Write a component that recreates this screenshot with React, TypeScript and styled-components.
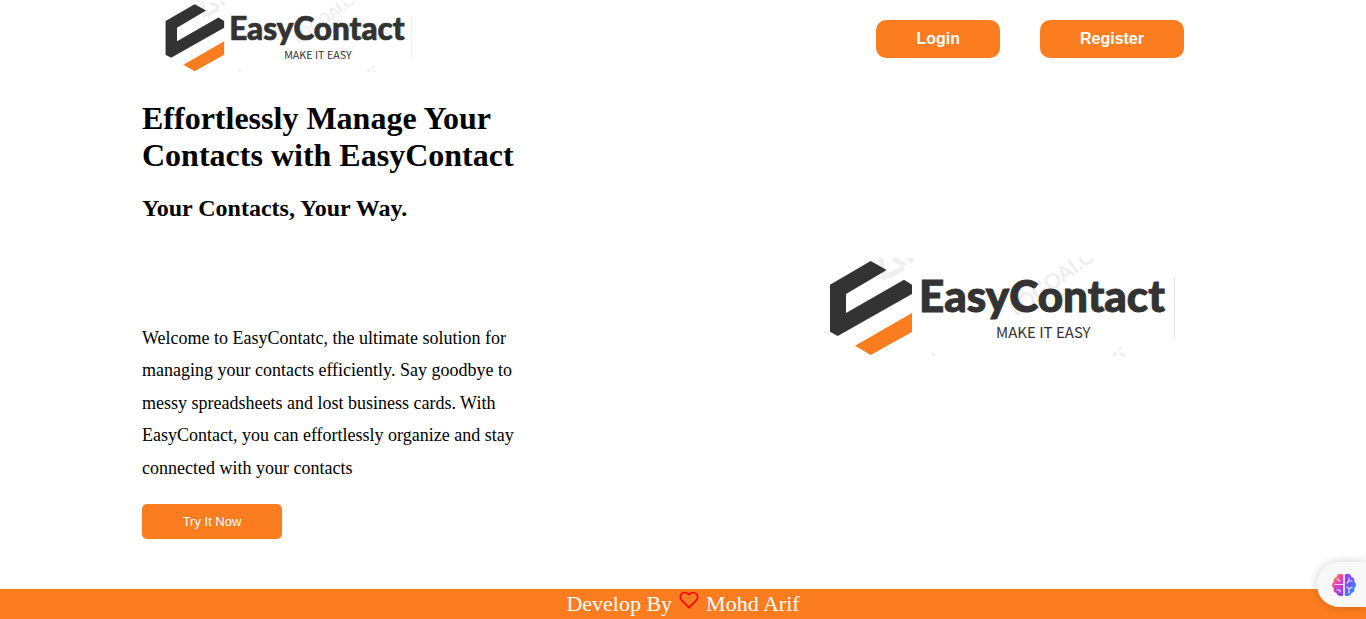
import React from "react";
import styled, { createGlobalStyle } from "styled-components";

const ORANGE = "#fc7d1f";

const GlobalStyle = createGlobalStyle`
  *, *::before, *::after { box-sizing: border-box; }
  html, body, #root { height: 100%; }
  body {
    margin: 0;
    background: #fff;
    color: #000;
    font-family: "Liberation Serif", "Times New Roman", serif;
  }
`;

const Page = styled.div`
  display: flex;
  flex-direction: column;
  min-height: 100%;
`;

const Header = styled.header`
  display: flex;
  align-items: flex-start;
  justify-content: space-between;
  padding: 2px 182px 0 162px;
`;

const HomeLink = styled.a`
  display: block;
`;

const LogoSvg = styled.svg<{ $width: number }>`
  display: block;
  width: ${({ $width }) => $width}px;
  height: auto;
`;

const Nav = styled.nav`
  display: flex;
  gap: 40px;
  padding-top: 18px;
`;

const NavButton = styled.button`
  height: 38px;
  padding: 0 40px;
  border: 0;
  border-radius: 10px;
  background: ${ORANGE};
  color: #fff;
  font: bold 16px/38px "Liberation Sans", Arial, sans-serif;
  cursor: pointer;
`;

const Main = styled.main`
  display: flex;
  flex: 1;
  align-items: flex-start;
  justify-content: space-between;
  padding: 28px 191px 50px 142px;
`;

const Intro = styled.section`
  width: 384px;
`;

const Title = styled.h1`
  margin: 0;
  font-size: 32px;
  line-height: 37px;
`;

const Subtitle = styled.h2`
  margin: 20px 0 0;
  font-size: 24px;
  line-height: 28px;
`;

const Description = styled.p`
  margin: 100px 0 0;
  font-size: 18px;
  line-height: 1.8;
`;

const TryButton = styled.button`
  display: block;
  min-width: 140px;
  height: 35px;
  margin-top: 20px;
  padding: 0 32px;
  border: 0;
  border-radius: 5px;
  background: ${ORANGE};
  color: #fff;
  font: 13px/35px "Liberation Sans", Arial, sans-serif;
  cursor: pointer;
`;

const Artwork = styled.div`
  padding-top: 158px;
`;

const Footer = styled.footer`
  display: flex;
  align-items: center;
  justify-content: center;
  gap: 7px;
  height: 30px;
  background: ${ORANGE};
  color: #fff;
  font-size: 22px;
  line-height: 30px;
`;

const Heart = styled.svg`
  display: block;
  width: 20px;
  height: 20px;
  margin-bottom: 8px;
`;

const AssistantTab = styled.button`
  position: fixed;
  right: 0;
  bottom: 12px;
  display: flex;
  align-items: center;
  width: 49px;
  height: 45px;
  padding: 0 0 0 15px;
  border: 0;
  border-radius: 22px 0 0 22px;
  background: #f8f8f8;
  box-shadow: 0 0 10px rgba(0, 0, 0, 0.2);
  cursor: pointer;
`;

function Logo({ width, id }: { width: number; id: string }) {
  return (
    <LogoSvg $width={width} viewBox="0 0 350 98" role="img" aria-label="EasyContact">
      <defs>
        <clipPath id={id}>
          <rect width="350" height="98" />
        </clipPath>
      </defs>
      <g clipPath={`url(#${id})`}>
        <g fill="none" stroke="#efefef" strokeWidth="5" strokeLinecap="round">
          <path d="M56 2 59 20M63 18 77 11M70 2 78 6M82 -2 86 2" />
          <path d="M288 98 291 95M296 96 299 98M295 91 296 90M108 97 109 96" strokeWidth="3" />
        </g>
        <text
          transform="translate(191 59) rotate(-36)"
          fill="#ececec"
          fontFamily="Lato, sans-serif"
          fontWeight="500"
          fontSize="21"
        >
          LOGOAI.COM
        </text>
        <path fill="#333" d="M45.7 3 61.7 12 21 36V55L79 21.7 87 26.7V36L12.7 78 5 73.7V26.7Z" />
        <path fill={ORANGE} d="M87 55V74L45.7 97 30 87.7Z" />
        <text
          x="94"
          y="53.5"
          fill="#333"
          stroke="#333"
          strokeWidth="1"
          fontFamily="Lato, sans-serif"
          fontWeight="900"
          fontSize="44"
        >
          EasyContact
        </text>
        <text x="171" y="79.5" fill="#333" fontFamily='"Noto Sans CJK SC", sans-serif' fontSize="15">
          MAKE IT EASY
        </text>
        <path d="M349.5 19V80" stroke="#e6e6e6" />
      </g>
    </LogoSvg>
  );
}

function Brain() {
  return (
    <svg width="24" height="24" viewBox="0 0 24 24" aria-hidden="true">
      <defs>
        <linearGradient id="brainLeft" x1="0" y1="0" x2="0.6" y2="1">
          <stop offset="0" stopColor="#ffa41f" />
          <stop offset="0.2" stopColor="#ff8a2a" />
          <stop offset="0.5" stopColor="#e83fb8" />
          <stop offset="1" stopColor="#8a3ff5" />
        </linearGradient>
        <linearGradient id="brainRight" x1="0" y1="0" x2="0.8" y2="1">
          <stop offset="0" stopColor="#a03af0" />
          <stop offset="0.5" stopColor="#6a5cff" />
          <stop offset="1" stopColor="#1b9dff" />
        </linearGradient>
      </defs>
      <path
        fill="url(#brainLeft)"
        d="M11.2 1.5V22.5C8 24 5 22.5 4.5 20 2 19.5 1 17 1.8 15-.5 13.5-.5 10.5 1.6 9 1 6.5 2.5 4.5 4.5 4 5 1 8.5 0 11.2 1.5Z"
      />
      <path
        fill="url(#brainRight)"
        d="M12.8 1.5V22.5C16 24 19 22.5 19.5 20 22 19.5 23 17 22.2 15 24.5 13.5 24.5 10.5 22.4 9 23 6.5 21.5 4.5 19.5 4 19 1 15.5 0 12.8 1.5Z"
      />
      <path
        fill="none"
        stroke="#f6d8fa"
        strokeWidth="1.2"
        strokeLinecap="round"
        d="M3 11.5H11M5 6 8 8M5 17H8V19M17 5V8L15 10M17 8H20M17 20V16L15 14M17 16 20 14"
      />
    </svg>
  );
}

export default function App() {
  return (
    <>
      <GlobalStyle />
      <Page>
        <Header>
          <HomeLink href="#home">
            <Logo width={250} id="logo-header" />
          </HomeLink>
          <Nav>
            <NavButton type="button">Login</NavButton>
            <NavButton type="button">Register</NavButton>
          </Nav>
        </Header>
        <Main>
          <Intro>
            <Title>Effortlessly Manage Your Contacts with EasyContact</Title>
            <Subtitle>Your Contacts, Your Way.</Subtitle>
            <Description>
              Welcome to EasyContatc, the ultimate solution for managing your contacts efficiently. Say
              goodbye to messy spreadsheets and lost business cards. With EasyContact, you can
              effortlessly organize and stay connected with your contacts
            </Description>
            <TryButton type="button">Try It Now</TryButton>
          </Intro>
          <Artwork>
            <Logo width={350} id="logo-hero" />
          </Artwork>
        </Main>
        <Footer>
          <span>Develop By</span>
          <Heart viewBox="0 0 24 24" role="img" aria-label="love">
            <path
              d="M20.84 4.61a5.5 5.5 0 0 0-7.78 0L12 5.67l-1.06-1.06a5.5 5.5 0 0 0-7.78 7.78l1.06 1.06L12 21.23l7.78-7.78 1.06-1.06a5.5 5.5 0 0 0 0-7.78z"
              fill="none"
              stroke="red"
              strokeWidth="2"
              strokeLinejoin="round"
            />
          </Heart>
          <span>Mohd Arif</span>
        </Footer>
      </Page>
      <AssistantTab type="button" aria-label="Open assistant">
        <Brain />
      </AssistantTab>
    </>
  );
}
